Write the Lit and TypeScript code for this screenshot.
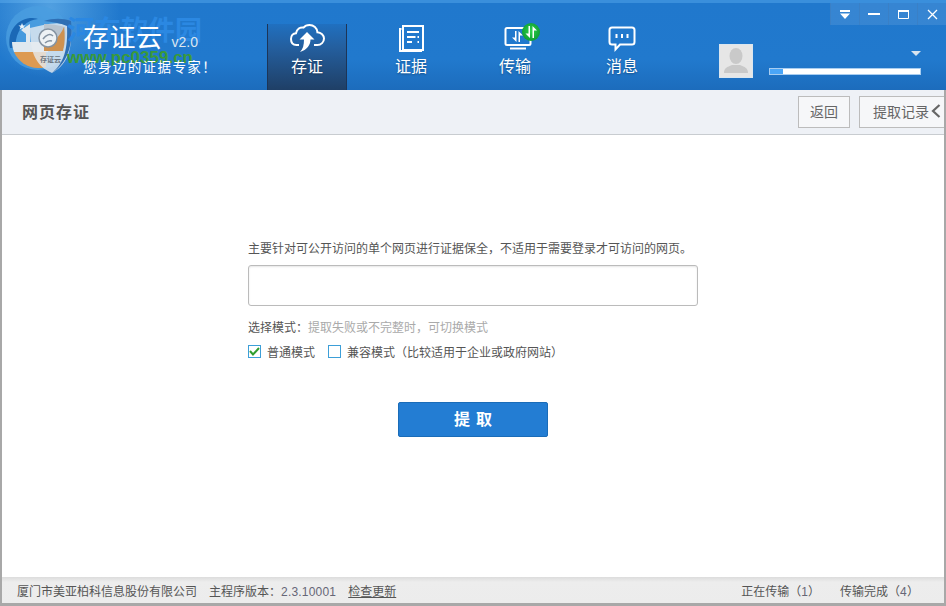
import { LitElement, html, css, svg } from 'lit';
import { customElement, property } from 'lit/decorators.js';

const cloudIcon = svg`<svg width="36" height="30" viewBox="0 0 36 30" fill="none">
  <path d="M10 21H7.500C3.800 21 2 18.400 2 15c0-3.200 2-5.600 5-5.800C8 5.200 11 3 14.500 3.600 16 1.700 18.400 1 20.500 1c4.200 0 7.600 3.200 7.900 7.200 3.700.2 6.600 3 6.600 6.400 0 3.500-2.900 6.400-6.700 6.400H25" stroke="#fff" stroke-width="2"/>
  <path d="M18 8l7.500 7.500h-4c0 5.500-3.500 10.500-10.500 12.500 3-3 4-7 4-12.500h-4.500z" fill="#fff"/>
</svg>`;

const docIcon = svg`<svg width="26" height="28" viewBox="-1 0 26 28" fill="none" stroke="#fff" stroke-width="2">
  <path d="M2.500 4H1v22h21v-1.500"/>
  <rect x="4" y="1" width="20" height="24"/>
  <path d="M8 7h12M8 12h8.500M18.500 12h1.500M8 17h5M18.500 17h1.500"/>
</svg>`;

const monitorIcon = svg`<svg width="50" height="30" viewBox="-14 0 50 30" fill="none" overflow="visible">
  <defs>
    <radialGradient id="badge" cx="50%" cy="45%" r="55%">
      <stop offset="0" stop-color="#30d24c"/>
      <stop offset="1" stop-color="#0e9f33"/>
    </radialGradient>
  </defs>
  <rect x="1.500" y="4" width="25" height="17" rx="1.500" stroke="#fff" stroke-width="2"/>
  <path d="M6 24.500h16" stroke="#fff" stroke-width="2"/>
  <path d="M12.500 7v11L8 13.500h3V7zM14.500 18V7L19 11.500h-3V18z" fill="#fff"/>
  <circle cx="27" cy="8" r="9" fill="url(#badge)"/>
  <path d="M26 2v12l-4.500-4.500h3V2zM28.500 14V2L33 6.500h-3V14z" fill="#fff"/>
</svg>`;

const chatIcon = svg`<svg width="28" height="28" viewBox="0 -1 28 28" fill="none">
  <path d="M4 1.500h20c1.500 0 2.500 1 2.500 2.500v12c0 1.500-1 2.500-2.500 2.500H12L7.500 23.500v-5H4c-1.500 0-2.500-1-2.500-2.500V4c0-1.500 1-2.500 2.500-2.500z" stroke="#fff" stroke-width="2"/>
  <path d="M8.500 8v4M14 8v4M19.500 8v4" stroke="#fff" stroke-width="2"/>
</svg>`;

const logo = svg`<svg width="80" height="78" viewBox="0 0 80 78">
  <circle cx="38" cy="38" r="32" fill="#4a9de0" opacity=".8"/>
  <path d="M10 48C7 33 15 20 30 18c3 0 6 0 8 1-11 1-20 9-22 21-.5 3-.5 6 0 8z" fill="#1a68b6"/>
  <path d="M22 23l1 2.500h2.500l-2 1.500 1 2.500-2.500-1.500-2.500 1.500 1-2.500-2-1.500h2.500z" fill="#e8f2fa"/>
  <path d="M12 42h14V34l-5-4 9-6v18h18v10H14c-1-3-2-6-2-10z" fill="#dfe8ef"/>
  <path d="M14 52h32v15c-3 1-6 1-8 1-11 0-20-7-24-16z" fill="#dd9a52"/>
  <path d="M30 28c13-3 28-8 41-2 1 20-1 37-19 47-16-7-22-20-22-45z" fill="#e6ebf0" opacity=".8"/>
  <path d="M44 21c9-3 19-3 27 0 2 20-1 40-19 52 12-10 16-24 15-47-7-3-15-4-23-5z" fill="#2f6fb4"/>
  <path d="M44 24c7 0 14 1 21 3 1 8 0 15-1 21H44z" fill="#b9c4cf"/>
  <path d="M44 44c8 0 15-6 20-17 1 8 1 16-1 24H44z" fill="#cf914f"/>
  <circle cx="48" cy="38" r="9" fill="#eef2f5" stroke="#8593a2" stroke-width="1.500"/>
  <path d="M43 39c3-4 7-6 10-3M45 43c2-2 4-3 7-2" fill="none" stroke="#8593a2" stroke-width="1.500"/>
  <text x="40" y="62" font-size="7" font-weight="700" fill="#6b7580">存证云</text>
</svg>`;

@customElement('tab-item')
class TabItem extends LitElement {
  @property({ type: String }) label = '';

  @property({ type: Boolean, reflect: true }) active = false;

  static styles = css`
    :host {
      display: flex;
      flex-direction: column;
      align-items: center;
      width: 80px;
      height: 90px;
      padding-top: 24px;
      box-sizing: border-box;
      color: #fff;
      font-size: 16px;
    }

    :host([active]) {
      height: 66px;
      margin-top: 24px;
      padding-top: 0;
      background: linear-gradient(#2070c0 0%, #245f9f 35%, #1f3f66 100%);
      border-left: 1px solid #1d3557;
      border-right: 1px solid #1d3557;
    }

    .icon {
      height: 30px;
      display: flex;
      align-items: center;
      justify-content: center;
    }

    .label {
      line-height: 22px;
      text-shadow: 0 1px 2px rgba(0, 0, 0, 0.3);
    }
  `;

  render() {
    return html`<div class="icon"><slot></slot></div>
      <div class="label">${this.label}</div>`;
  }
}

@customElement('app-root')
class AppRoot extends LitElement {
  static styles = css`
    :host {
      display: block;
      width: 946px;
      height: 606px;
      font-family: 'Noto Sans CJK SC', 'Liberation Sans', sans-serif;
      font-size: 12px;
      color: #555;
      overflow: hidden;
    }

    .header {
      position: relative;
      height: 90px;
      display: flex;
      background:
        radial-gradient(circle 70px at 50px 8px, rgba(130, 200, 245, 0.5), transparent),
        linear-gradient(#3a8fdc 0, #3a8fdc 3px, #2078cd 3px, #2179cd 60px, #1c6cbc 100%);
    }

    .brand {
      position: relative;
      width: 267px;
      flex: none;
      padding: 21px 0 0 83px;
      box-sizing: border-box;
      color: #fff;
    }

    .logo {
      position: absolute;
      left: 0;
      top: 0;
    }

    .logo svg {
      display: block;
    }

    .watermark {
      position: absolute;
      left: 67px;
      top: 11px;
      font-size: 27px;
      font-weight: 700;
      line-height: 36px;
      color: #2b88e2;
    }

    .watermark-url {
      position: absolute;
      left: 67px;
      top: 46px;
      font-family: 'Liberation Sans', sans-serif;
      font-size: 17px;
      font-weight: 700;
      line-height: 24px;
      color: #3a9a3a;
    }

    .brand-name {
      position: relative;
      display: flex;
      align-items: baseline;
      line-height: 30px;
      font-size: 26px;
      letter-spacing: 0.5px;
    }

    .brand-name span {
      margin-left: 9px;
      font-family: 'Liberation Sans', sans-serif;
      font-size: 14px;
      letter-spacing: 0;
      color: #dbe6f0;
    }

    .slogan {
      position: relative;
      font-size: 13.500px;
      line-height: 14px;
      letter-spacing: 1.400px;
      margin-top: 2px;
    }

    .tabs {
      display: flex;
      gap: 24px;
    }

    .tabs tab-item:last-child {
      margin-left: 3px;
    }

    .user {
      position: absolute;
      left: 719px;
      top: 44px;
      width: 202px;
      height: 34px;
      display: flex;
      gap: 16px;
    }

    .avatar {
      width: 34px;
      height: 34px;
      box-sizing: border-box;
      border: 1px solid #dbe6ef;
      background: #e6e6e6;
      display: flex;
      align-items: center;
      justify-content: center;
    }

    .user-info {
      flex: 1;
      display: flex;
      flex-direction: column;
      align-items: flex-end;
      padding-top: 7px;
    }

    .caret {
      width: 0;
      height: 0;
      border-left: 5px solid transparent;
      border-right: 5px solid transparent;
      border-top: 5px solid #d8e4ef;
    }

    .quota {
      margin-top: 12px;
      width: 100%;
      height: 7px;
      box-sizing: border-box;
      background: #fff;
      border: 1px solid #a8cdf0;
    }

    .quota div {
      height: 100%;
      background: #4aa5f7;
    }

    .win-bar {
      position: absolute;
      top: 3px;
      right: 0;
      width: 116px;
      height: 22px;
      display: flex;
      background: rgba(255, 255, 255, 0.1);
    }

    .win-bar div {
      flex: 1;
      display: flex;
      align-items: center;
      justify-content: center;
      border-left: 1px solid #3a80c6;
    }

    .win-bar svg {
      display: block;
    }

    .window {
      height: 516px;
      display: flex;
      flex-direction: column;
      box-sizing: border-box;
      border-left: 2px solid #a8a8a8;
      border-right: 2px solid #a8a8a8;
      border-bottom: 3px solid #a8a8a8;
    }

    .sub-header {
      height: 45px;
      flex: none;
      box-sizing: border-box;
      display: flex;
      align-items: center;
      background: #eef1f6;
      border-bottom: 1px solid #c8ccd0;
      padding-left: 20px;
      overflow: hidden;
    }

    .title {
      font-size: 16px;
      font-weight: 700;
      letter-spacing: 1px;
      color: #555;
      flex: 1;
      padding-bottom: 2px;
    }

    .btn {
      height: 32px;
      box-sizing: border-box;
      border: 1px solid #bcbcbc;
      background: #f6f7f9;
      font-size: 14px;
      color: #666;
      display: flex;
      align-items: center;
      justify-content: center;
      flex: none;
      padding-bottom: 2px;
    }

    .back {
      width: 52px;
      margin-right: 9px;
    }

    .records {
      width: 85px;
      padding-left: 13px;
      justify-content: flex-start;
      border-right: 0;
      gap: 2px;
    }

    .main {
      flex: 1;
      display: flex;
      flex-direction: column;
      align-items: flex-start;
      background: #fff;
      padding: 104px 0 0 246px;
    }

    .intro {
      line-height: 18px;
    }

    .url {
      display: block;
      margin-top: 8px;
      width: 450px;
      height: 41px;
      box-sizing: border-box;
      border: 1px solid #bbb;
      border-radius: 3px;
      box-shadow: inset 0 1px 2px rgba(0, 0, 0, 0.1);
      outline: none;
    }

    .mode {
      margin-top: 12px;
      line-height: 18px;
    }

    .hint {
      color: #aaa;
    }

    .options {
      margin-top: 6px;
      display: flex;
      align-items: center;
      height: 18px;
    }

    .check {
      width: 13px;
      height: 13px;
      box-sizing: border-box;
      border: 1px solid #3d9fd8;
      margin-right: 6px;
      display: flex;
      align-items: center;
      justify-content: center;
    }

    .gap {
      width: 13px;
    }

    .submit {
      margin: 42px 0 0 150px;
      width: 150px;
      height: 35px;
      box-sizing: border-box;
      border: 1px solid #1a6cb8;
      border-radius: 2px;
      background: #237dd3;
      color: #fff;
      font-family: inherit;
      font-size: 16px;
      font-weight: 700;
      letter-spacing: 6px;
      padding: 0 0 3px 6px;
    }

    .footer {
      height: 26px;
      flex: none;
      display: flex;
      align-items: center;
      padding-left: 15px;
      background: linear-gradient(#dcdcdc, #ededed 5px, #ececec);
      color: #555;
    }

    .footer .ver {
      margin-left: 12px;
    }

    .num {
      font-family: 'Liberation Sans', sans-serif;
      letter-spacing: 0.200px;
      color: #667;
    }

    .footer u {
      margin-left: 12px;
    }

    .transfer {
      margin-left: auto;
      display: flex;
      gap: 20px;
      padding-right: 25px;
    }
  `;

  render() {
    return html`<div class="header">
        <div class="brand">
          <div class="logo">${logo}</div>
          <div class="watermark">河东软件园</div>
          <div class="watermark-url">www.pc0359.cn</div>
          <div class="brand-name">存证云<span>v2.0</span></div>
          <div class="slogan">您身边的证据专家！</div>
        </div>
        <div class="tabs">
          <tab-item label="存证" active>${cloudIcon}</tab-item>
          <tab-item label="证据">${docIcon}</tab-item>
          <tab-item label="传输">${monitorIcon}</tab-item>
          <tab-item label="消息">${chatIcon}</tab-item>
        </div>
        <div class="user">
          <div class="avatar">
            <svg width="24" height="26" viewBox="0 0 24 26" fill="#c9c9c9">
              <ellipse cx="12" cy="8" rx="6.500" ry="8" />
              <path d="M0 25c0-5 3-6 8-8h8c5 2 8 3 8 8z" />
            </svg>
          </div>
          <div class="user-info">
            <div class="caret"></div>
            <div class="quota"><div style="width: 13px"></div></div>
          </div>
        </div>
        <div class="win-bar">
          <div>
            <svg width="12" height="9" viewBox="0 0 12 9" fill="#fff"><path d="M1 0h10v2H1zM1 3.500h10L6 9z" /></svg>
          </div>
          <div>
            <svg width="12" height="2" viewBox="0 0 12 2" fill="#fff"><path d="M0 0h12v2H0z" /></svg>
          </div>
          <div>
            <svg width="11" height="9" viewBox="0 0 11 9" fill="none" stroke="#fff"><path d="M.5 1h10v7.500H.5z" stroke-width="1" /><path d="M0 1h11" stroke-width="2" /></svg>
          </div>
          <div>
            <svg width="11" height="11" viewBox="0 0 11 11" stroke="#fff" stroke-width="1.300"><path d="M1 1l9 9M10 1l-9 9" /></svg>
          </div>
        </div>
      </div>
      <div class="window">
        <div class="sub-header">
          <div class="title">网页存证</div>
          <div class="btn back">返回</div>
          <div class="btn records">
            提取记录
            <svg width="10" height="14" viewBox="0 0 10 14" fill="none" stroke="#666" stroke-width="2.200"><path d="M8.500 1 2 7l6.500 6" /></svg>
          </div>
        </div>
        <div class="main">
          <div class="intro">主要针对可公开访问的单个网页进行证据保全，不适用于需要登录才可访问的网页。</div>
          <input class="url" type="text" />
          <div class="mode">选择模式：<span class="hint">提取失败或不完整时，可切换模式</span></div>
          <div class="options">
            <div class="check">
              <svg width="11" height="9" viewBox="0 0 11 9" fill="none" stroke="#2f9e2f" stroke-width="2"><path d="M1 4l3 3.500L10 1" /></svg>
            </div>
            <span>普通模式</span>
            <span class="gap"></span>
            <div class="check"></div>
            <span>兼容模式（比较适用于企业或政府网站）</span>
          </div>
          <button class="submit" type="button">提取</button>
        </div>
        <div class="footer">
          <span>厦门市美亚柏科信息股份有限公司</span>
          <span class="ver">主程序版本：<span class="num">2.3.10001</span></span>
          <u>检查更新</u>
          <div class="transfer">
            <span>正在传输（<span class="num">1</span>）</span>
            <span>传输完成（<span class="num">4</span>）</span>
          </div>
        </div>
      </div>`;
  }
}
